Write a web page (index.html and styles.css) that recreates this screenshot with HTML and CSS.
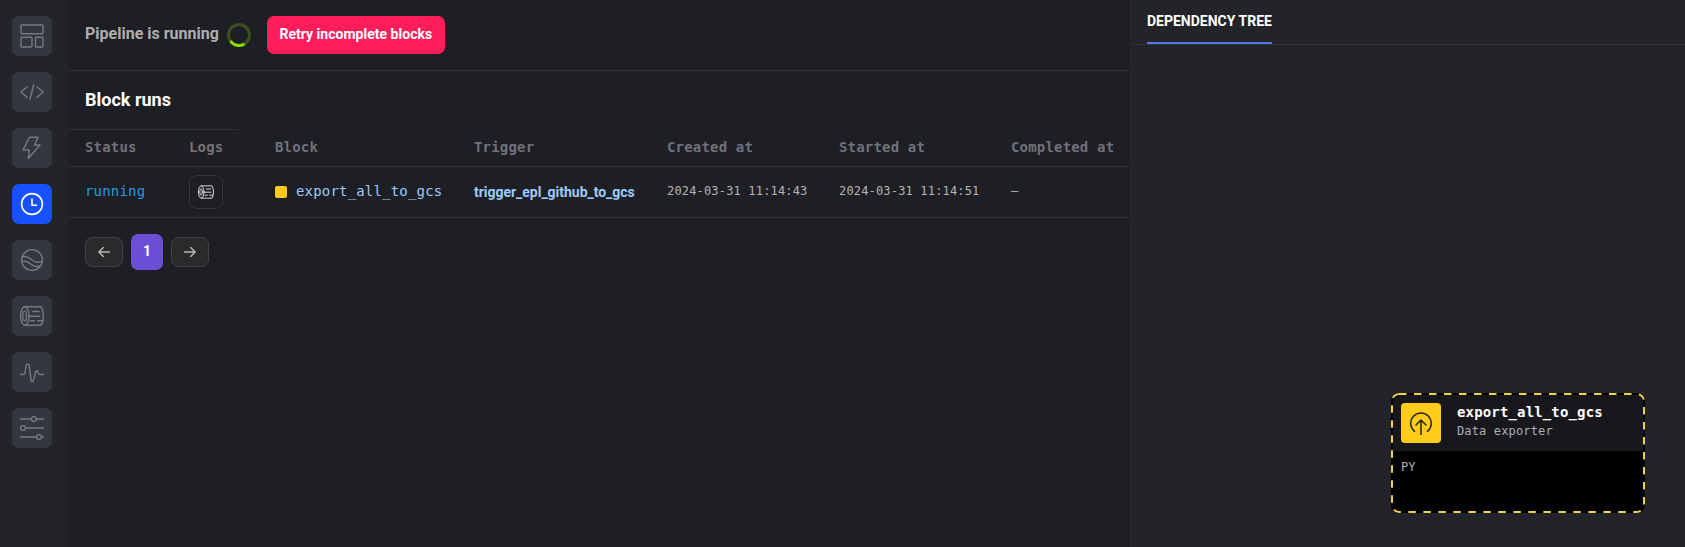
FILE: index.html
```html
<!DOCTYPE html>
<html lang="en">
<head>
<meta charset="utf-8">
<title>Block runs</title>
<link rel="stylesheet" href="styles.css">
</head>
<body>
<div class="app">
  <nav class="sidebar">
    <a class="nav-item"><svg viewBox="0 0 24 24"><rect x="1" y="1" width="22" height="8.700" rx="1"/><rect x="1" y="13.300" width="11" height="9.700" rx="1"/><rect x="15.500" y="13.300" width="7.500" height="9.700" rx="1"/></svg></a>
    <a class="nav-item"><svg viewBox="0 0 24 24"><path d="M7 7 L.9 12 L7 17.300 M17 7 L23.200 12 L17 17.300 M13.600 5 L10 19.300"/></svg></a>
    <a class="nav-item"><svg viewBox="0 0 24 24"><path d="M9.500 1.200 H18 L14.500 9 H20 L8.300 22.500 L9.300 14 H3 Z"/></svg></a>
    <a class="nav-item active"><svg viewBox="0 0 24 24"><circle cx="12" cy="12" r="10.400"/><path d="M12 7 V13.200 H16.500"/></svg></a>
    <a class="nav-item"><svg viewBox="0 0 24 24"><circle cx="12" cy="12" r="10.400"/><path d="M2.200 9 C6 7.500 9 9.500 12 12 S18 15 22.200 13.500 M1.800 13.500 C6 12.500 8.500 14 11.500 16.500 S17 19 19.800 18"/></svg></a>
    <a class="nav-item"><svg viewBox="0 0 24 24"><use href="#log"/></svg></a>
    <a class="nav-item"><svg viewBox="0 0 24 24"><path d="M.5 14.500 H3.500 Q4.600 14.500 5 12.500 L6.300 5 Q6.700 3.800 8 4 Q9 4 9.200 5.500 L11 20 Q11.200 21.800 12 21.800 Q13.200 21.700 13.700 19.500 L15.700 11.500 Q16.400 9.700 17.500 11.500 L18.500 13.500 Q19 14.500 20 14.500 H23.500"/></svg></a>
    <a class="nav-item"><svg viewBox="0 0 24 24"><path d="M.5 3 H11.300 M16.300 3 H23.500 M5.500 12 H23.500 M.5 21 H16.500 M21.300 21 H23.500"/><circle cx="13.800" cy="3" r="2.400"/><circle cx="3" cy="12" r="2.400"/><circle cx="18.900" cy="21" r="2.400"/></svg></a>
  </nav>

  <main class="main">
    <header class="status-bar">
      <span class="status-text">Pipeline is running</span>
      <svg class="spinner" viewBox="0 0 24 24"><circle class="spinner-track" cx="12" cy="12" r="10.500"/><path class="spinner-arc" d="M3.400 18 A10.500 10.500 0 0 0 17.400 21"/></svg>
      <button class="retry">Retry incomplete blocks</button>
    </header>
    <h1 class="title">Block runs</h1>
    <div class="table">
      <div class="row head">
        <span>Status</span><span>Logs</span><span>Block</span><span>Trigger</span><span>Created at</span><span>Started at</span><span>Completed at</span>
      </div>
      <div class="row body">
        <span class="running">running</span>
        <span class="log-cell"><button class="log-button"><svg viewBox="0 0 24 24"><use href="#log"/></svg></button></span>
        <span class="block-name"><i class="swatch"></i><span class="lift">export_all_to_gcs</span></span>
        <span class="trigger">trigger_epl_github_to_gcs</span>
        <span class="date">2024-03-31 11:14:43</span>
        <span class="date">2024-03-31 11:14:51</span>
        <span class="date dash">—</span>
      </div>
    </div>
    <div class="pager">
      <button class="arrow"><svg viewBox="0 0 12 12"><path d="M11.500 6 H1 M5.300 1.500 L.9 6 L5.300 10.500"/></svg></button>
      <button class="page">1</button>
      <button class="arrow"><svg viewBox="0 0 12 12"><path d="M.5 6 H11 M6.700 1.500 L11.100 6 L6.700 10.500"/></svg></button>
    </div>
  </main>

  <aside class="panel">
    <div class="tabs"><span class="tab">DEPENDENCY TREE</span></div>
    <div class="canvas">
      <div class="node">
        <svg class="node-outline" viewBox="0 0 254 120"><rect x="1" y="1" width="252" height="118" rx="7"/></svg>
        <div class="node-head">
          <div class="node-icon"><svg viewBox="0 0 24 24"><path d="M5.500 20.300 A10.300 10.300 0 1 1 18.500 20.300 M12 23.800 V9.500 M7 14 L12 9 L17 14"/></svg></div>
          <div class="node-label"><b>export_all_to_gcs</b><span>Data exporter</span></div>
        </div>
        <div class="node-body">PY</div>
      </div>
    </div>
  </aside>
</div>
<svg class="defs"><defs><g id="log"><ellipse cx="4.800" cy="12" rx="4.200" ry="9.200"/><ellipse cx="4.600" cy="12" rx="1.900" ry="4.900"/><path d="M5 2.800 H21 C24 7 24 17 21 21.200 H5 M12.500 7.500 H19 M9 12.300 H19.500 M10.500 16.800 H14 M17.500 16.800 H22"/></g></defs></svg>
</body>
</html>
```
FILE: styles.css
```css
* { box-sizing: border-box; }
body { margin: 0; background: #1f2024; font-family: Roboto, sans-serif; overflow: hidden; }
button { margin: 0; padding: 0; font: inherit; }
svg { display: block; fill: none; stroke: currentColor; stroke-linecap: round; stroke-linejoin: round; }
.defs { width: 0; height: 0; }
.app { display: grid; grid-template-columns: 68px 1062px 1fr; height: 547px; }

.sidebar { display: flex; flex-direction: column; gap: 16px; padding: 16px 0 0 12px; background: #232429; border-right: 1px solid #26272b; }
.nav-item { display: flex; align-items: center; justify-content: center; width: 40px; height: 40px; border-radius: 7px; background: #35373f; color: #777981; }
.nav-item svg { width: 24px; height: 24px; stroke-width: 1.400; }
.nav-item.active { background: #1751ff; color: #fff; }
.nav-item.active svg { stroke-width: 1.600; }

.main { padding-right: 1px; background: #1e1f24; }
.status-bar { display: flex; align-items: center; height: 71px; padding: 0 17px; border-bottom: 1px solid #303136; }
.status-text { padding-bottom: 3px; color: #aeaeae; font-size: 16px; font-weight: 700; }
.spinner { width: 24px; height: 24px; margin-left: 8px; stroke-width: 3; stroke-linecap: butt; }
.spinner-track { stroke: #3b4f20; }
.spinner-arc { stroke: #8ade00; }
.retry { width: 178px; height: 38px; margin-left: 16px; padding-bottom: 2px; border: 0; border-radius: 7px; background: #ff1e5b; color: #fff; font-size: 14px; font-weight: 700; letter-spacing: 0.020px; }
.title { height: 58px; margin: 0; padding-left: 17px; color: #fff; font-size: 18px; line-height: 57px; }

.table { font-family: "DejaVu Sans Mono", monospace; }
.row { display: grid; grid-template-columns: 104px 86px 199px 193px 172px 172px 1fr; align-items: center; padding-left: 17px; border-bottom: 1px solid #303136; white-space: nowrap; }
.head { height: 38px; padding-bottom: 2px; color: #70717a; font-size: 14px; font-weight: 700; letter-spacing: 0.180px; background: linear-gradient(#303136, #303136) 0 0 / 170px 1px no-repeat; }
.body { height: 51px; font-size: 14px; letter-spacing: 0.180px; }
.running, .lift, .date { padding-bottom: 2px; }
.running { color: #269be3; }
.log-button { display: flex; align-items: center; justify-content: center; width: 34px; height: 34px; border: 1px solid #35363c; border-radius: 8px; background: transparent; color: #d8d8da; }
.log-button svg { width: 16px; height: 16px; stroke-width: 1.500; }
.block-name { display: flex; align-items: center; gap: 9px; color: #9ccbff; }
.swatch { width: 12px; height: 12px; border-radius: 2px; background: #ffcc19; }
.trigger { padding-bottom: 1px; color: #9ccbff; font-family: Roboto, sans-serif; font-size: 14px; font-weight: 700; letter-spacing: -0.020px; }
.date { color: #b4b4b5; font-size: 12px; letter-spacing: 0.170px; }

.pager { display: flex; align-items: center; gap: 8px; padding: 16px 17px; }
.arrow { display: flex; align-items: center; justify-content: center; width: 38px; height: 30px; border: 1px solid #414142; border-radius: 7px; background: #2a2a2b; color: #b5b5b5; }
.arrow svg { width: 12px; height: 12px; stroke-width: 1.500; }
.page { width: 32px; height: 36px; padding-bottom: 2px; border: 0; border-radius: 7px; background: #6b50d7; color: #fff; font-size: 14px; font-weight: 700; }

.panel { background: #232429; border-left: 1px solid #27282c; }
.tabs { display: flex; height: 45px; padding-left: 16px; border-bottom: 1px solid #303136; }
.tab { height: 44px; border-bottom: 2px solid #517bee; color: #fff; font-size: 14px; font-weight: 700; line-height: 43px; }
.canvas { position: relative; height: 502px; }
.node { position: absolute; left: 260px; top: 348px; width: 254px; height: 120px; padding: 2px; border-radius: 8px; overflow: hidden; background: #000; font-family: "DejaVu Sans Mono", monospace; }
.node-outline { position: absolute; inset: 0; width: 254px; height: 120px; stroke: #eed34a; stroke-width: 2; stroke-dasharray: 7.500 7.500; stroke-linecap: butt; }
.node-head { display: flex; gap: 16px; height: 56px; padding: 8px; background: #18181c; }
.node-icon { display: flex; align-items: center; justify-content: center; width: 40px; height: 40px; border-radius: 4px; background: #ffcc19; color: #2c2816; }
.node-icon svg { width: 24px; height: 24px; stroke-width: 1.600; }
.node-label { display: flex; flex-direction: column; color: #fff; font-size: 14px; line-height: 19px; letter-spacing: 0.150px; white-space: nowrap; }
.node-label span { color: #aeaeae; font-size: 12px; line-height: 18px; }
.node-body { padding: 8px; color: #aeaeae; font-size: 12px; line-height: 17px; }
```
